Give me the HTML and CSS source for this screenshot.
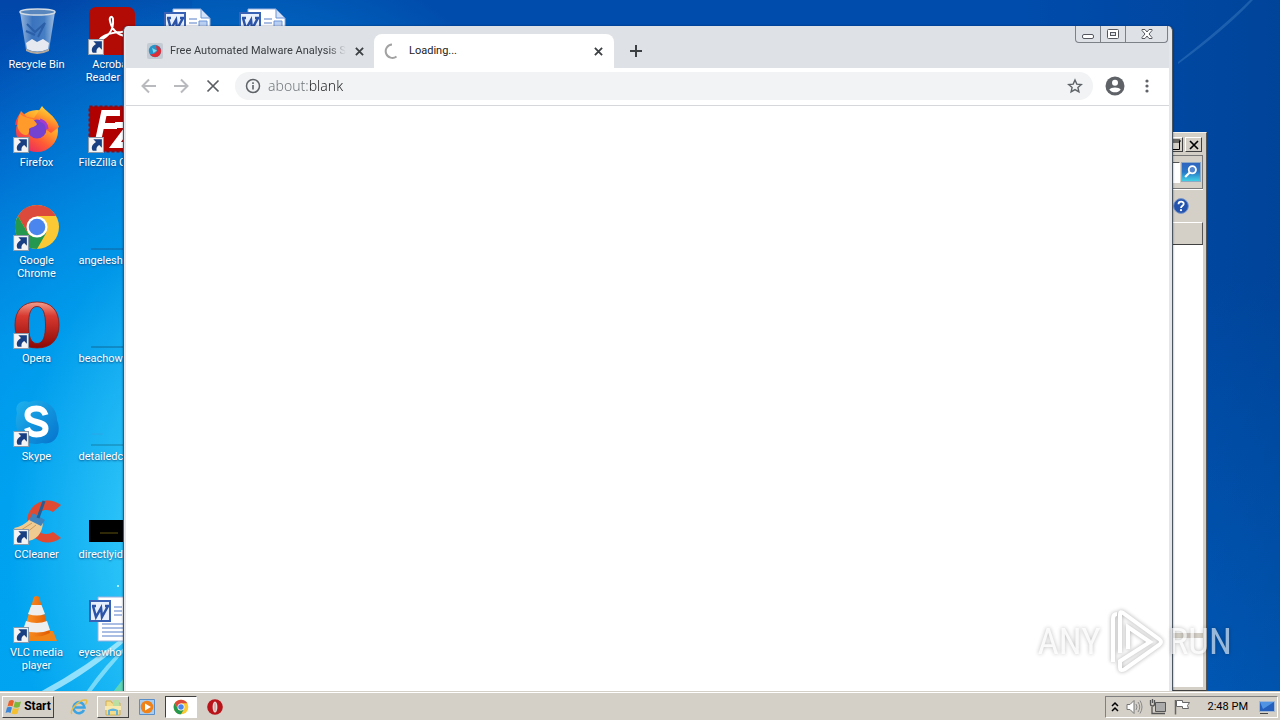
FILE: index.html
```html
<!DOCTYPE html>
<html lang="en">
<head>
<meta charset="utf-8">
<title>Desktop</title>
<link rel="stylesheet" href="styles.css">
</head>
<body>
<svg class="defs" aria-hidden="true">
  <defs>
    <linearGradient id="operaRed" x1="0" y1="0" x2="0" y2="1"><stop offset="0" stop-color="#f0a090"/><stop offset=".3" stop-color="#d83a30"/><stop offset="1" stop-color="#8c0805"/></linearGradient>
    <linearGradient id="foxFire" x1="1" y1="0" x2=".3" y2="1"><stop offset="0" stop-color="#fff04a"/><stop offset=".4" stop-color="#ffa52a"/><stop offset=".7" stop-color="#ff5a35"/><stop offset="1" stop-color="#e82a62"/></linearGradient>
    <linearGradient id="binGlass" x1="0" y1="0" x2="1" y2="0"><stop offset="0" stop-color="#a9c4e4"/><stop offset=".35" stop-color="#4178bf"/><stop offset=".7" stop-color="#4e84c6"/><stop offset="1" stop-color="#b4cce8"/></linearGradient>
    <linearGradient id="skypeBlue" x1="0" y1="0" x2="1" y2="1"><stop offset="0" stop-color="#1fb2ee"/><stop offset="1" stop-color="#0573cc"/></linearGradient>
    <linearGradient id="cone" x1="0" y1="0" x2="1" y2="0"><stop offset="0" stop-color="#ff9a2a"/><stop offset="1" stop-color="#e05a00"/></linearGradient>
  </defs>
  <symbol id="shortcut" viewBox="0 0 15 15"><path d="M.5.5h14v14H.5z" fill="#f4f4f4" stroke="#8c9bab"/><path d="M5 2h8v8l-2.500-2.600C8.500 8.600 7.600 10 8 13H4.500C2.600 10 3.800 6.800 7.500 4.700z" fill="#173f82"/></symbol>
  <symbol id="chrome" viewBox="0 0 48 48"><circle cx="24" cy="24" r="22" fill="#fbc934"/><path d="M4.900 13A22 22 0 0 1 43.100 13H24L14.500 29.500z" fill="#dc4a3c"/><path d="M4.900 13 14.500 29.500C18 35 25 36 33.500 29.500L24 46A22 22 0 0 1 4.900 13z" fill="#25984f"/><circle cx="24" cy="24" r="10.500" fill="#fff"/><circle cx="24" cy="24" r="8.300" fill="#4b86ee"/></symbol>
  <symbol id="opera" viewBox="0 0 48 48"><path fill-rule="evenodd" d="M24 1C38 1 46 9 46 24S38 47 24 47 2 39 2 24 10 1 24 1zm0 4.500c-6.500 0-8.500 8-8.500 18.500s2 18.500 8.500 18.500 8.500-8 8.500-18.500-2-18.500-8.500-18.500z" fill="url(#operaRed)" stroke="#8e1510" stroke-width=".8"/></symbol>
  <symbol id="word" viewBox="0 0 48 48"><path d="M10 2h28l9 9v35H10z" fill="#fff" stroke="#9ab2dc"/><path d="M38 2v9h9z" fill="#d3e2f8" stroke="#6d94d5"/><path d="M26 12h8M26 16h8M26 20h8M14 29h29M14 33h29M14 37h29M14 41h29" stroke="#8fa9dc" stroke-width="1.500"/><path d="M36 14h8v6h-8z" fill="#b9cff2" stroke="#6d94d5"/><path d="M2 6h20v20H2z" fill="#e8effc" stroke="#3a62b4" stroke-width="2"/><path d="m5 11 3 11 5-9 1 9 6-11M4 11h4m9 0h4" fill="none" stroke="#2b54a8" stroke-width="2.500"/></symbol>
  <symbol id="close" viewBox="0 0 10 10"><path d="m1 1 8 8M9 1 1 9" stroke="currentColor" stroke-width="2"/></symbol>
</svg>

<main class="desktop">
  <svg class="wallpaper" viewBox="0 0 1280 692" preserveAspectRatio="none" aria-hidden="true">
    <path d="M40 692Q85 668 130 632v5Q90 672 52 692z" fill="#c9f5ff" opacity=".7"/>
    <path d="M86 692Q105 664 130 642v3Q107 670 91 692z" fill="#d9ffff" opacity=".5"/>
    <path d="M113 692l14-18v18z" fill="#7ce29a" opacity=".7"/>
    <circle cx="118" cy="586" r="1" fill="#dff"/>
    <path d="M1178 62Q1225 25 1250 0h3Q1225 30 1178 64z" fill="#5c9ad4" opacity=".3"/>
  </svg>

  <div class="icons">
    <div class="icon"><div class="art"><svg viewBox="0 0 48 48"><path d="M7 5 13 43Q24 50 36 43L42 5z" fill="url(#binGlass)" opacity=".9"/><path d="m13 36 6-4 5 3 6-3 6 4-1 6q-11 5-21 0z" fill="#e6eaf0"/><path d="m14 17 8 8 10-9-7 14M13 24l9 4" stroke="#2b5fa8" stroke-width="2" fill="none"/><ellipse cx="24.500" cy="5" rx="17.500" ry="3" fill="#5987bd" stroke="#d3dbe4" stroke-width="1.500"/><path d="M13 42q11 6 23 0v2q-12 6-23 0z" fill="#b4a99d"/></svg></div><span class="label">Recycle Bin</span></div>
    <div class="icon"><div class="art"><svg viewBox="0 0 48 48"><circle cx="24" cy="26" r="21" fill="url(#foxFire)"/><path d="M2 20C3 13 7 9 8 6l6 6 7 1 8-12c2 4 14 10 17 21l-8 6-13-9z" fill="url(#foxFire)"/><circle cx="24" cy="24" r="9.500" fill="#7542cf"/><path d="M7 9c4 3 8 4 13 5l4 5c-1 3-6 3-8 5 1 6-3 8-8 4-5-5-4-12-1-19z" fill="#ff9a2b"/><path d="M27 15c6 2 7 5 7 9" stroke="#a23cd0" stroke-width="3" fill="none"/></svg><svg class="arrow"><use href="#shortcut"/></svg></div><span class="label">Firefox</span></div>
    <div class="icon"><div class="art"><svg><use href="#chrome"/></svg><svg class="arrow"><use href="#shortcut"/></svg></div><span class="label">Google Chrome</span></div>
    <div class="icon"><div class="art"><svg><use href="#opera"/></svg><svg class="arrow"><use href="#shortcut"/></svg></div><span class="label">Opera</span></div>
    <div class="icon"><div class="art"><svg viewBox="0 0 48 48"><path d="M4 14C1 6 8 0 16 3c12-5 28 2 28 18 5 12-1 26-15 23C11 49-1 32 4 14z" fill="url(#skypeBlue)"/><path d="M32.500 16C31 11 28 9.500 23.500 9.500c-6 0-9 2.500-9 6.500 0 9 18 5 18 13.500 0 4-3.500 6-9 6-5 0-8-2-9.500-6.500" fill="none" stroke="#fff" stroke-width="6"/></svg><svg class="arrow"><use href="#shortcut"/></svg></div><span class="label">Skype</span></div>
    <div class="icon"><div class="art"><svg viewBox="0 0 48 48"><path d="M48 8A21 21 0 1 0 48 41l-8-6a12 12 0 1 1 0-20z" fill="#df4a32"/><path d="M18 21 30 26C29 37 23 45 10 44L1 31q10-2 17-10z" fill="#efcb91"/><path d="m5 35 14-9M8 40l15-12" stroke="#c99b5b" stroke-width="1"/><path d="m20 16 12 7-4 6-12-6z" fill="#3d83bd"/><path d="m31 4-6 17" stroke="#235e96" stroke-width="3"/></svg><svg class="arrow"><use href="#shortcut"/></svg></div><span class="label">CCleaner</span></div>
    <div class="icon"><div class="art"><svg viewBox="0 0 48 48"><path d="M9 36h31l4 10H4z" fill="#f08418"/><path d="M21 2q2.500-2 5 0l11 36q-13 7-27 0z" fill="url(#cone)"/><path d="m18.500 10h10l3.500 9q-8 3-17 0zM13 26q11 4 21 0l3 9q-13 5-27 0z" fill="#eee"/></svg><svg class="arrow"><use href="#shortcut"/></svg></div><span class="label">VLC media player</span></div>

    <div class="icon"><div class="art"><svg viewBox="0 0 48 48"><rect x="1" width="46" height="48" rx="7" fill="#b20a05"/><path d="M12 33c8-3 14-10 13-21-1-4-4-2-3 2 2 9 8 14 16 15 5 0 3-5-5-4-8 0-17 3-20 6-2 2-2 3-1 2z" fill="none" stroke="#fff" stroke-width="2"/></svg><svg class="arrow"><use href="#shortcut"/></svg></div><span class="label">Acrobat Reader DC</span></div>
    <div class="icon"><div class="art"><svg viewBox="0 0 48 48"><rect x="1.500" y="1.500" width="45" height="45" fill="#b00000" stroke="#8a0c14" stroke-width="2" stroke-dasharray="3 2"/><path d="m10 36 6-28h16M14 21h15M27 20h15L27 40h15" fill="none" stroke="#fff" stroke-width="6"/></svg><svg class="arrow"><use href="#shortcut"/></svg></div><span class="label cut">FileZilla Client</span></div>
    <div class="icon"><div class="art"><svg viewBox="0 0 48 48"><path d="M3 46h45" stroke="#1164a0"/></svg></div><span class="label cut">angelesho</span></div>
    <div class="icon"><div class="art"><svg viewBox="0 0 48 48"><path d="M3 46h45" stroke="#0d6b9c"/></svg></div><span class="label cut">beachown</span></div>
    <div class="icon"><div class="art"><svg viewBox="0 0 48 48"><path d="M3 46h45" stroke="#1580a8"/><path d="M3 35h12" stroke="#2ba7e8"/></svg></div><span class="label cut">detailedcl</span></div>
    <div class="icon"><div class="art"><svg viewBox="0 0 48 48"><path d="M1 23h47v22H1z"/><path d="M12 36h18" stroke="#5f5210"/></svg></div><span class="label cut">directlyide</span></div>
    <div class="icon"><div class="art"><svg><use href="#word"/></svg></div><span class="label cut">eyeswho</span></div>

    <div class="icon newcol"><div class="art"><svg><use href="#word"/></svg></div></div>
    <div class="icon newcol"><div class="art"><svg><use href="#word"/></svg></div></div>
  </div>

  <section class="explorer" aria-label="Explorer window">
    <div class="ex-title">
      <button class="ex-btn" aria-label="Maximize"><svg viewBox="0 0 12 12"><path d="M1 1h10v2H1zM1.500 2v8.500h9V2" fill="none" stroke="#000"/></svg></button>
      <button class="ex-btn" aria-label="Close"><svg viewBox="0 0 12 12"><path d="m2 2 8 8M10 2l-8 8" stroke="#000" stroke-width="1.700"/></svg></button>
    </div>
    <div class="ex-search"><input aria-label="Search"><button class="ex-go" aria-label="Go"><svg viewBox="0 0 20 20"><circle cx="11.500" cy="7.500" r="4" fill="#5285cb" stroke="#fff" stroke-width="2"/><path d="m8.500 10.500-5 5" stroke="#fff" stroke-width="2.500"/></svg></button></div>
    <div class="ex-bar"><button class="help" aria-label="Help"><svg viewBox="0 0 16 16"><circle cx="8" cy="8" r="7.400" fill="#2453ae" stroke="#7998cd"/><path d="M5.500 6.200C5.500 2.800 11 3 10.700 6 10.500 7.700 8 7.800 8 10" fill="none" stroke="#fff" stroke-width="1.800"/><circle cx="8" cy="12.200" r="1.100" fill="#fff"/></svg></button></div>
    <div class="ex-head"></div>
    <div class="ex-body"><div class="ex-split"></div></div>
  </section>

  <section class="browser" aria-label="Browser window">
    <div class="tabs">
      <div class="tab">
        <svg class="favicon" viewBox="0 0 16 16"><rect width="16" height="16" rx="2" fill="#c4cbd2"/><circle cx="8" cy="8" r="6.200" fill="#2794c9"/><path d="M9 2.500c3 .5 5 2.500 5 5.500 0 4-3 6-6 6-2 0-4-1-5-3 3 1 6-1 7-3z" fill="#e22c35"/><path d="m5 5 5 2.500L6.500 10z" fill="#77dcef"/></svg>
        <span class="tab-title fade">Free Automated Malware Analysis S</span>
        <button class="tab-close" aria-label="Close tab"><svg><use href="#close"/></svg></button>
      </div>
      <div class="tab active">
        <svg class="favicon" viewBox="0 0 16 16"><path d="M8 1.500A6.700 6.700 0 1 0 12.500 13.500" fill="none" stroke="#a2a2a2" stroke-width="2"/></svg>
        <span class="tab-title">Loading...</span>
        <button class="tab-close" aria-label="Close tab"><svg><use href="#close"/></svg></button>
      </div>
      <button class="new-tab" aria-label="New tab"><svg viewBox="0 0 12 12"><path d="M6 0v12M0 6h12" stroke="#3c4043" stroke-width="2"/></svg></button>
      <div class="caption">
        <button aria-label="Minimize"><svg viewBox="0 0 24 16"><rect x="6.500" y="8.500" width="11" height="4" rx="1.500" fill="#fff" stroke="#54585e"/></svg></button>
        <button aria-label="Maximize"><svg viewBox="0 0 24 16"><rect x="6.500" y="3.500" width="11" height="9" rx="1" fill="#fff" stroke="#54585e"/><rect x="9.500" y="6.500" width="5" height="3" fill="#dee1e6" stroke="#54585e"/></svg></button>
        <button class="wide" aria-label="Close"><svg viewBox="0 0 24 16"><path d="M7 3.500h3l2 2.500 2-2.500h3v1L14 8l3 3.500v1h-3L12 10l-2 2.500H7v-1L10 8 7 4.500z" fill="#fff" stroke="#54585e"/></svg></button>
      </div>
    </div>
    <div class="toolbar">
      <button class="tool" aria-label="Back"><svg viewBox="0 0 16 16"><path d="M15 8H2M8 1.500 1.500 8 8 14.500" fill="none" stroke="#b8babd" stroke-width="2"/></svg></button>
      <button class="tool" aria-label="Forward"><svg viewBox="0 0 16 16"><path d="M1 8h13M8 1.500 14.500 8 8 14.500" fill="none" stroke="#b8babd" stroke-width="2"/></svg></button>
      <button class="tool" aria-label="Stop"><svg viewBox="0 0 16 16"><path d="m2.500 2.500 11 11M13.500 2.500l-11 11" stroke="#5a5e62" stroke-width="1.700"/></svg></button>
      <div class="omnibox">
        <svg class="info" viewBox="0 0 16 16"><circle cx="8" cy="8" r="6.500" fill="none" stroke="#5f6368" stroke-width="1.500"/><path d="M8 7v4.500M8 4.300V6" stroke="#5f6368" stroke-width="1.600"/></svg>
        <input class="url" type="text" value="about:blank" aria-label="Address">
        <button class="star" aria-label="Bookmark"><svg viewBox="0 0 16 16"><path d="m8 2 1.800 4.100 4.500.4-3.400 3 1 4.400L8 11.600l-3.900 2.300 1-4.400-3.400-3 4.500-.4z" fill="none" stroke="#5f6368" stroke-width="1.400"/></svg></button>
      </div>
      <button class="tool profile" aria-label="Profile"><svg viewBox="0 0 20 20"><circle cx="10" cy="10" r="9.500" fill="#5f6368"/><circle cx="10" cy="6.800" r="3" fill="#fff"/><path d="M4.300 13.500C6 10.700 14 10.700 15.700 13.500 13 17.300 7 17.300 4.300 13.500z" fill="#fff"/></svg></button>
      <button class="tool menu" aria-label="Menu"><svg viewBox="0 0 16 16"><g fill="#5f6368"><circle cx="8" cy="3" r="1.600"/><circle cx="8" cy="8" r="1.600"/><circle cx="8" cy="13" r="1.600"/></g></svg></button>
    </div>
    <div class="page"></div>
  </section>

  <div class="watermark"><span>ANY</span><svg viewBox="0 0 60 64"><path d="M8 52V9q0-5 4-5M15 43V4q0-3 3-1l36 26q4 3 0 6L20 59q-5 3-5-2v-6l30-19-22-15v22" fill="none" stroke="#fff" stroke-width="4"/></svg><span>RUN</span></div>
</main>

<footer class="taskbar">
  <button class="start"><svg viewBox="0 0 18 16"><path d="M4 2q3-2 5 0L7.500 7.500Q5 6 2.500 7.500z" fill="#e8622b"/><path d="M10 2.500q3 1.500 6 0L14.500 8Q11 9.500 8.500 8z" fill="#7fb739"/><path d="M2 8.500q3-1.500 5 0L5.500 14Q3 12.500.500 14z" fill="#3c86d8"/><path d="M8 9q3 1.500 6 0l-1.500 5.500q-3 1.500-6 0z" fill="#f4c02f"/></svg>Start</button>
  <nav class="apps">
    <button class="app" aria-label="Internet Explorer"><svg viewBox="0 0 18 18"><path d="M14 12A5.500 5.500 0 1 1 14.500 9.500H5" fill="none" stroke="#3da4e4" stroke-width="2.600"/><path d="M2 16C-1 13 9 1 16 2q2 1-1 5" fill="none" stroke="#e9bd3f" stroke-width="1.400"/></svg></button>
    <button class="app raised" aria-label="Explorer"><svg viewBox="0 0 18 18"><path d="M2 3h5l1 2h8v12H2z" fill="#f3dd8c" stroke="#cfae55"/><path d="M9 2h6v6H9z" fill="#b9e0a2"/><path d="M1 8h16v4H1z" fill="#f8e9ae"/><path d="M4 17v-5q5-3 10 0v5h-2v-4H6v4z" fill="#62b4dd"/></svg></button>
    <button class="app" aria-label="Media Player"><svg viewBox="0 0 18 18"><path d="M1.500 1.500h15v15h-15z" fill="#a8cdf0" stroke="#5a8fc8"/><circle cx="9" cy="9" r="6.300" fill="#ef8218"/><path d="m7 5.500 6 3.500-6 3.500z" fill="#fff"/></svg></button>
    <button class="app pressed" aria-label="Chrome"><svg><use href="#chrome"/></svg></button>
    <button class="app" aria-label="Opera"><svg viewBox="0 0 18 18"><circle cx="9" cy="9" r="7.800" fill="#b8141a"/><ellipse cx="9" cy="9" rx="2.400" ry="5.500" fill="#e8dcd8"/><ellipse cx="9" cy="9" rx="1" ry="4.500" fill="#d8b0ac"/></svg></button>
  </nav>
  <div class="tray">
    <button class="expand" aria-label="Show hidden icons"><svg viewBox="0 0 8 12"><path d="m1 5 3-3 3 3M1 10l3-3 3 3" fill="none" stroke="#000" stroke-width="1.500"/></svg></button>
    <svg class="t-icon" viewBox="0 0 18 18"><path d="M2 6.500h3l4-4v13l-4-4H2z" fill="#fff" stroke="#777"/><path d="M11 6q2 3 0 6M13 4q3.500 5 0 10M15 2.500q4 6.500 0 13" fill="none" stroke="#888"/></svg>
    <svg class="t-icon" viewBox="0 0 18 18"><path d="M6.500 4.500h10v9h-10z" fill="#aaa" stroke="#555"/><path d="M8 15.500h8M3 9v6.500h5M1.500 2v4q0 2 2 2t2-2V2M3.500 1v4" fill="none" stroke="#555" stroke-width="1.300"/></svg>
    <svg class="t-icon" viewBox="0 0 18 18"><path d="M2.500 2v14.500" stroke="#666" stroke-width="1.500"/><path d="M3.500 2.500h6v2h7l-2 3 1 3H9.500v-2h-6z" fill="#fff" stroke="#666"/></svg>
    <time class="clock">2:48 PM</time>
    <svg class="t-icon" viewBox="0 0 18 18"><path d="M1.500 3.500h15v10h-15z" fill="#245fbd" stroke="#a0b6d2"/><path d="M2 4h14L5 11z" fill="#4f93e2"/><path d="M2 15.500h8" stroke="#444"/></svg>
  </div>
</footer>
</body>
</html>
```
FILE: styles.css
```css
* { box-sizing: border-box; }
body {
  margin: 0;
  height: 100vh;
  display: flex;
  flex-direction: column;
  overflow: hidden;
  font: 11px/13px Roboto, "Noto Sans", sans-serif;
}
svg { display: block; }
button { margin: 0; padding: 0; border: 0; background: none; font: inherit; color: inherit; display: flex; align-items: center; justify-content: center; }
.defs { position: absolute; width: 0; height: 0; }

/* desktop */
.desktop {
  flex: 1;
  min-height: 0;
  position: relative;
  overflow: hidden;
  background:
    radial-gradient(ellipse 420px 600px at 240px 540px, rgba(90, 230, 255, .95), rgba(0, 165, 240, .7) 55%, transparent 100%),
    linear-gradient(90deg, transparent 80%, rgba(0, 45, 100, .25) 100%),
    linear-gradient(180deg, #0146a8 0%, #0060c8 25%, #0086e4 50%, #009cf0 75%, #00a2f0 100%) left / 15% 100% no-repeat,
    linear-gradient(180deg, #004cac, #004cac 40%, #0060c4);
}
.wallpaper { position: absolute; inset: 0; width: 100%; height: 100%; }
.icons {
  position: relative;
  height: 100%;
  display: grid;
  grid-template-rows: repeat(7, 98px);
  grid-auto-flow: column;
  grid-auto-columns: 75px;
  justify-content: start;
  padding-top: 7px;
}
.icon { display: flex; flex-direction: column; align-items: center; gap: 3px; color: #fff; text-align: center; padding-right: 2px; }
.icon.newcol { grid-row: 1; }
.art { position: relative; width: 48px; height: 48px; }
.art svg { width: 100%; height: 100%; }
.art .arrow { position: absolute; left: 0; bottom: 0; width: 16px; height: 16px; }
.label { max-width: 66px; text-shadow: 0 1px 2px rgba(0, 40, 90, .7); }
.label.cut { width: 66px; text-align: left; white-space: nowrap; }

/* explorer window */
.explorer {
  position: absolute;
  top: 132px; right: 73px; bottom: 1px; left: 45%;
  display: flex;
  flex-direction: column;
  padding: 3px;
  background: #d4d0c8;
  border: 1px solid;
  border-color: #f4f2ee #555 #404040 #f4f2ee;
}
.ex-title { display: flex; justify-content: flex-end; gap: 2px; padding: 1px; height: 19px; }
.ex-btn { width: 17px; height: 15px; background: #d4d0c8; border: 1px solid; border-color: #fff #404040 #404040 #fff; }
.ex-btn svg { width: 12px; height: 12px; }
.ex-search { display: flex; justify-content: flex-end; align-items: center; gap: 1px; height: 34px; border: 1px solid; border-color: #777 #777 #777 #fff; padding-right: 1px; }
.ex-search input { width: 160px; height: 21px; border: 1px solid #555; border-color: #555 #fff #fff #555; background: #fff; }
.ex-go { width: 20px; height: 20px; background: linear-gradient(#2f64be, #2878c8 50%, #42d0e4); border: 1px solid #8ea9c4; }
.ex-go svg { width: 18px; height: 18px; }
.ex-bar { display: flex; justify-content: flex-end; align-items: center; height: 33px; padding-right: 14px; border-top: 1px solid #fff; }
.help svg { width: 16px; height: 16px; }
.ex-head { height: 23px; border: 1px solid; border-color: #fff #555 #404040 #fff; }
.ex-body { flex: 1; display: flex; flex-direction: column; justify-content: flex-end; background: #fff; padding-bottom: 49px; }
.ex-split { height: 5px; background: #d4d0c8; }

/* browser window */
.browser {
  position: absolute;
  top: 26px; right: 107px; bottom: 0; left: 123px;
  display: flex;
  flex-direction: column;
  background: #e4e6ea;
  border: solid #4b5560;
  border-width: 0 1px;
  border-radius: 5px 5px 0 0;
  padding: 0 3px 0 2px;
  box-shadow: 0 0 2px rgba(0, 20, 60, .6);
}
.tabs { display: flex; align-items: flex-end; height: 42px; padding: 0 1px 0 13px; background: #dee1e6; border-radius: 5px 5px 0 0; color: #3c4043; }
.tab { display: flex; align-items: center; width: 235px; height: 34px; padding: 0 9px 0 8px; gap: 7px; }
.tab.active { width: 240px; padding: 0 10px; gap: 9px; background: #fff; border-radius: 8px 8px 0 0; color: #222; }
.favicon { width: 16px; height: 16px; flex: none; }
.tab-title { flex: 1; min-width: 0; overflow: hidden; white-space: nowrap; line-height: 16px; }
.fade { -webkit-mask-image: linear-gradient(90deg, #000 90%, transparent); mask-image: linear-gradient(90deg, #000 90%, transparent); }
.tab-close { width: 12px; height: 16px; color: #3c4043; }
.tab-close svg { width: 9px; height: 9px; }
.new-tab { width: 28px; height: 34px; margin-left: 8px; }
.new-tab svg { width: 12px; height: 12px; }
.caption { align-self: flex-start; display: flex; margin-left: auto; border: 1px solid #7c8188; border-top: 0; border-radius: 0 0 4px 4px; }
.caption button { width: 25px; height: 16px; border-right: 1px solid #7c8188; }
.caption .wide { width: 41px; border-right: 0; }
.caption svg { width: 24px; height: 16px; }
.toolbar { display: flex; align-items: center; height: 38px; background: #fff; border-bottom: 1px solid #d5d7da; padding: 0 6px 2px 7px; }
.tool { width: 32px; height: 28px; }
.tool svg { width: 16px; height: 16px; }
.profile { margin-left: 6px; }
.profile svg { width: 20px; height: 20px; }
.omnibox { flex: 1; display: flex; align-items: center; height: 28px; margin-left: 6px; padding: 0 10px; gap: 7px; border-radius: 14px; background: #f1f3f4; }
.info { width: 16px; height: 16px; }
.url {
  flex: 1; min-width: 0; border: 0; padding: 0; height: 20px;
  font: 300 14px/20px "Noto Sans", sans-serif;
  color: transparent;
  background: linear-gradient(90deg, #6c7176 42px, #202124 42px);
  -webkit-background-clip: text;
  background-clip: text;
}
.star svg { width: 16px; height: 16px; }
.page { flex: 1; background: #fff; }

/* watermark */
.watermark {
  position: absolute;
  right: 48px; bottom: 18px;
  display: flex;
  align-items: center;
  gap: 4px;
  color: rgba(255, 255, 255, .85);
  font: 37px/64px "Liberation Sans Narrow", "Roboto Condensed", "Open Sans Condensed", Roboto, sans-serif;
  filter: drop-shadow(0 0 2px rgba(0, 0, 0, .45));
  opacity: .7;
}
.watermark svg { width: 60px; height: 64px; }

/* taskbar */
.taskbar {
  height: 28px;
  display: flex;
  align-items: center;
  padding: 2px;
  background: #d4d0c8;
  border-top: 1px solid #fff;
  box-shadow: 0 -1px 0 #d4d0c8;
  position: relative;
}
.start { width: 52px; height: 22px; font-weight: 700; font-size: 12px; gap: 1px; border: 1px solid; border-color: #fff #404040 #404040 #fff; }
.start svg { width: 18px; height: 16px; }
.apps { display: flex; margin-left: 9px; gap: 2px; }
.app { width: 32px; height: 22px; border: 1px solid transparent; }
.app svg { width: 18px; height: 18px; }
.app.raised { border-color: #fff #404040 #404040 #fff; }
.app.pressed { background: #fff; border-color: #404040 #fff #fff #404040; }
.app.pressed svg { width: 16px; height: 16px; }
.tray { margin-left: auto; display: flex; align-items: center; height: 22px; padding: 0 1px 0 5px; gap: 6px; border: 1px solid; border-color: #808080 #fff #fff #808080; }
.expand svg { width: 8px; height: 12px; }
.t-icon { width: 18px; height: 18px; }
.clock { margin: 0 4px 0 11px; }
```
